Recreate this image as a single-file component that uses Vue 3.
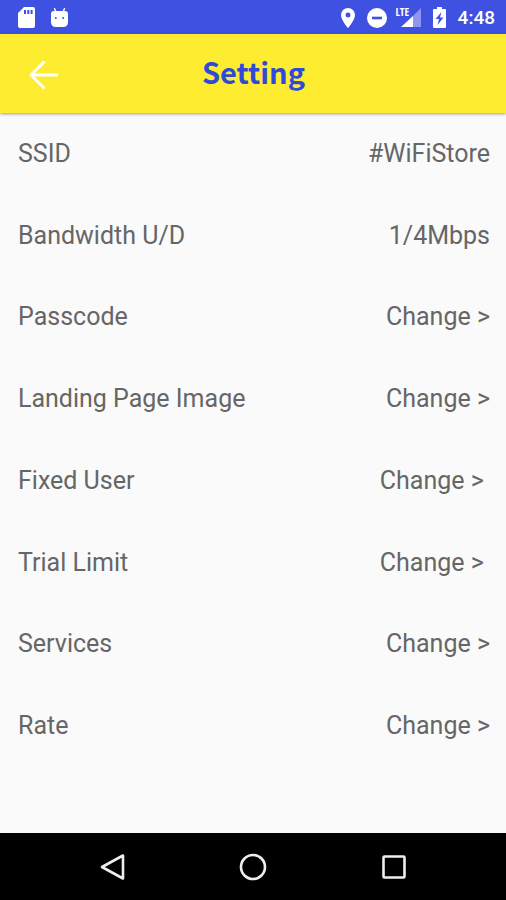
<script setup>
const rows = [
  { label: 'SSID', value: '#WiFiStore' },
  { label: 'Bandwidth U/D', value: '1/4Mbps' },
  { label: 'Passcode', value: 'Change >', action: true },
  { label: 'Landing Page Image', value: 'Change >', action: true },
  { label: 'Fixed User', value: 'Change > ', action: true },
  { label: 'Trial Limit', value: 'Change > ', action: true },
  { label: 'Services', value: 'Change >', action: true },
  { label: 'Rate', value: 'Change >', action: true },
]
</script>

<template>
  <div class="screen">
    <div class="status">
      <div class="status-group left">
        <svg width="17" height="21" viewBox="0 0 17 21" aria-hidden="true">
          <path fill="#fff" fill-rule="evenodd" d="M6 0H15Q17 0 17 2V19Q17 21 15 21H2Q0 21 0 19V6ZM6 3V7H8V3ZM9.300 3V7H11.300V3ZM12.600 3V7H14.600V3Z" />
        </svg>
        <svg width="17" height="20" viewBox="0 0 17 20" aria-hidden="true">
          <path d="M3.500 0.500L5 4M13.500 0.500L12 4" stroke="#fff" stroke-width="1.400" stroke-linecap="round" />
          <path fill="#fff" fill-rule="evenodd" d="M3 3H14Q17 3 17 6V14Q17 19 12 19H5Q0 19 0 14V6Q0 3 3 3ZM4.800 9A1 1 0 1 0 4.810 11A1 1 0 1 0 4.800 9ZM12.200 9A1 1 0 1 0 12.210 11A1 1 0 1 0 12.200 9Z" />
        </svg>
      </div>
      <div class="status-group right">
        <svg width="14" height="20" viewBox="0 0 14 20" aria-hidden="true">
          <path fill="#fff" fill-rule="evenodd" d="M7 0A7 7 0 0 1 14 7C14 12 7 20 7 20S0 12 0 7A7 7 0 0 1 7 0ZM7 4.500A2.500 2.500 0 1 0 7.010 9.500A2.500 2.500 0 1 0 7 4.500Z" />
        </svg>
        <svg width="20" height="20" viewBox="0 0 20 20" aria-hidden="true">
          <circle cx="10" cy="10" r="10" fill="#fff" />
          <path d="M5 10H15" stroke="#3f51e0" stroke-width="2.600" />
        </svg>
        <div class="signal">
          <svg width="26" height="21" viewBox="0 0 26 21" aria-hidden="true">
            <path fill="#8d97ee" d="M26 1V20H18V9Z" />
            <path fill="#fff" d="M6 20L18 9V20Z" />
          </svg>
          <span class="lte">LTE</span>
        </div>
        <svg width="13" height="21" viewBox="0 0 13 21" aria-hidden="true">
          <path fill="#fff" d="M4 0H9V2H12Q13 2 13 3V20Q13 21 12 21H1Q0 21 0 20V3Q0 2 1 2H4Z" />
          <path fill="#3f51e0" d="M8.500 5L2.500 12H6L4.500 18L10.500 10.500H7Z" />
        </svg>
        <span class="clock">4:48</span>
      </div>
    </div>

    <header class="bar">
      <button class="back" type="button" aria-label="Back">
        <svg width="30" height="30" viewBox="0 0 30 30" aria-hidden="true">
          <path d="M15.500 1.500L2 15L15.500 28.500M2 15H29" fill="none" stroke="#fff" stroke-width="3" />
        </svg>
      </button>
      <h1>Setting</h1>
    </header>

    <main class="list">
      <div v-for="row in rows" :key="row.label" class="row">
        <span>{{ row.label }}</span>
        <button v-if="row.action" class="value" type="button" :aria-label="`Change ${row.label}`">{{ row.value }}</button>
        <span v-else class="value">{{ row.value }}</span>
      </div>
    </main>

    <nav class="nav">
      <button type="button" aria-label="Back">
        <svg width="28" height="28" viewBox="0 0 28 28" aria-hidden="true">
          <path d="M24 2.500V25.500L3 14Z" fill="none" stroke="#eee" stroke-width="2.600" stroke-linejoin="round" />
        </svg>
      </button>
      <button type="button" aria-label="Home">
        <svg width="28" height="28" viewBox="0 0 28 28" aria-hidden="true">
          <circle cx="14" cy="14" r="12" fill="none" stroke="#eee" stroke-width="2.600" />
        </svg>
      </button>
      <button type="button" aria-label="Recent apps">
        <svg width="28" height="28" viewBox="0 0 28 28" aria-hidden="true">
          <rect x="3.500" y="3.500" width="21" height="21" rx="1" fill="none" stroke="#eee" stroke-width="2.600" />
        </svg>
      </button>
    </nav>
  </div>
</template>

<style>
body {
  margin: 0;
}
</style>

<style scoped>
.screen {
  display: flex;
  flex-direction: column;
  min-height: 100vh;
  background: #fafafa;
  color: #666;
  font-family: Roboto, sans-serif;
}

svg {
  display: block;
  flex: none;
}

button {
  padding: 0;
  border: 0;
  background: none;
  color: inherit;
  font: inherit;
  cursor: pointer;
}

.status {
  box-sizing: border-box;
  display: flex;
  justify-content: space-between;
  align-items: center;
  height: 34px;
  padding: 1px 11px 0 18px;
  background: #3f51e0;
}

.status-group {
  display: flex;
  align-items: center;
}

.left {
  gap: 16px;
}

.right {
  gap: 12px;
}

.signal {
  position: relative;
  margin-left: -4px;
}

.lte {
  position: absolute;
  top: -1px;
  left: 1px;
  color: #fff;
  font-family: "Liberation Sans Narrow", "Open Sans Condensed", Roboto, sans-serif;
  font-size: 11px;
  font-weight: 700;
  line-height: 12px;
}

.clock {
  color: #fff;
  font-size: 19px;
  font-weight: 500;
  line-height: 24px;
}

.bar {
  box-sizing: border-box;
  display: grid;
  grid-template-columns: 30px 1fr 30px;
  align-items: center;
  height: 79px;
  padding: 2px 28px 0 29px;
  background: #fdec30;
  box-shadow: 0 1px 3px rgba(0, 0, 0, 0.4);
}

h1 {
  margin: 0;
  padding-bottom: 8px;
  color: #2f49d8;
  font-family: "Noto Sans CJK SC", sans-serif;
  font-size: 29px;
  font-weight: 700;
  line-height: 40px;
  text-align: center;
}

.list {
  flex: 1;
  display: grid;
  grid-auto-rows: 1fr;
  padding: 0 16px 66px 18px;
}

.row {
  display: flex;
  justify-content: space-between;
  align-items: center;
  font-size: 25px;
  line-height: 30px;
}

.value {
  white-space: pre;
}

.nav {
  display: flex;
  justify-content: space-around;
  align-items: center;
  height: 67px;
  padding: 0 42px 0 43px;
  background: #000;
}
</style>
